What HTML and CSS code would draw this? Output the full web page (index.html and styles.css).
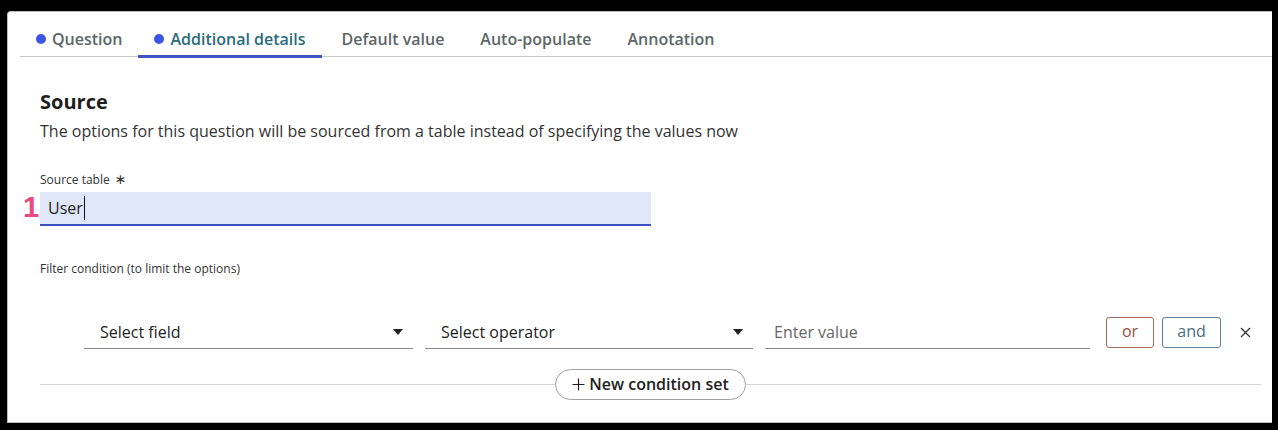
FILE: index.html
```html
<!DOCTYPE html>
<html lang="en">
<head>
<meta charset="utf-8">
<title>Source</title>
<link rel="stylesheet" href="styles.css">
</head>
<body>
<div class="frame">
  <nav class="tabs">
    <div class="tab tab-dot"><span class="dot"></span>Question</div>
    <div class="tab tab-dot active"><span class="dot"></span>Additional details</div>
    <div class="tab tab-plain">Default value</div>
    <div class="tab tab-plain">Auto-populate</div>
    <div class="tab tab-plain">Annotation</div>
  </nav>
  <main class="content">
    <h2 class="title">Source</h2>
    <p class="desc">The options for this question will be sourced from a table instead of specifying the values now</p>

    <div class="field">
      <label class="label">Source table <span class="req">∗</span></label>
      <div class="input-wrap">
        <span class="marker">1</span>
        <div class="input">User<span class="caret-cursor"></span></div>
      </div>
    </div>

    <div class="filter-label">Filter condition (to limit the options)</div>

    <div class="cond-row">
      <div class="select"><span>Select field</span><span class="tri"></span></div>
      <div class="select"><span>Select operator</span><span class="tri"></span></div>
      <div class="value">Enter value</div>
      <button class="btn btn-or">or</button>
      <button class="btn btn-and">and</button>
      <span class="close">
        <svg width="11" height="11" viewBox="0 0 11 11"><path d="M1 1L10 10M10 1L1 10" stroke="#333" stroke-width="1.3" fill="none"/></svg>
      </span>
    </div>

    <div class="divider">
      <span class="line"></span>
      <button class="pill">
        <svg width="13" height="13" viewBox="0 0 13 13"><path d="M6.5 0.5V12.5M0.5 6.5H12.5" stroke="#222" stroke-width="1.2" fill="none"/></svg>
        New condition set
      </button>
      <span class="line"></span>
    </div>
  </main>
</div>
</body>
</html>
```
FILE: styles.css
```css
* { box-sizing: border-box; }
html, body { margin: 0; padding: 0; }
body {
  background: #000;
  font-family: "Open Sans", "Liberation Sans", sans-serif;
  color: #222;
}
.frame {
  margin: 11px 6px 0 7px;
  height: 412px;
  background: #fff;
  border: 1px solid #bdbdbd;
  border-right: none;
  border-radius: 4px 0 0 0;
}
.tabs {
  display: flex;
  margin-left: 12px;
  height: 45px;
  border-bottom: 1px solid #c6c6c6;
}
.tab {
  position: relative;
  display: flex;
  align-items: center;
  padding: 9px 16px 0;
  font-size: 16px;
  font-weight: 600;
  color: #5e6668;
  white-space: nowrap;
}
.tab-plain { margin-left: 4px; }
.tab.active { color: #2a6b7c; }
.tab.active::after {
  content: "";
  position: absolute;
  left: 0; right: 0; bottom: -2px;
  height: 3px;
  background: #3f55c2;
}
.dot {
  width: 10px; height: 10px;
  border-radius: 50%;
  background: #3b55e4;
  margin-right: 6px;
}
.content {
  padding: 0 11px 0 32px;
}
.title {
  margin: 32px 0 0;
  font-size: 20px;
  line-height: 26px;
  font-weight: 700;
  color: #1e1e1e;
}
.desc {
  margin: 5px 0 0;
  font-size: 16px;
  line-height: 22px;
  color: #333;
}
.field { margin-top: 29px; }
.label {
  display: block;
  font-size: 12px;
  line-height: 16px;
  color: #333;
}
.req { font-family: "DejaVu Sans", sans-serif; font-size: 14px; margin-left: 2px; }
.input-wrap {
  position: relative;
  margin-top: 4px;
}
.marker {
  position: absolute;
  left: -17px;
  top: -2px;
  font-family: "Liberation Sans", sans-serif;
  font-weight: 700;
  font-size: 29px;
  line-height: 34px;
  color: #e94a7f;
}
.input {
  width: 611px;
  height: 34px;
  background: #dfe6f7;
  border-bottom: 2px solid #3b53c2;
  padding: 0 8px;
  font-size: 16px;
  line-height: 32px;
  color: #222;
  display: flex;
  align-items: center;
}
.caret-cursor {
  display: inline-block;
  width: 1px;
  height: 24px;
  background: #111;
  margin-left: 1px;
}
.filter-label {
  margin-top: 35px;
  font-size: 12px;
  line-height: 16px;
  color: #333;
}
.cond-row {
  display: flex;
  align-items: center;
  margin-top: 40px;
  margin-left: 44px;
  height: 32px;
}
.select {
  width: 329px;
  height: 32px;
  border-bottom: 1px solid #8a8a8a;
  display: flex;
  align-items: center;
  justify-content: space-between;
  padding: 0 10px 1px 16px;
  font-size: 16px;
  color: #222;
  margin-right: 12px;
}
.select + .select { width: 328px; }
.tri {
  width: 0; height: 0;
  border-left: 5.5px solid transparent;
  border-right: 5.5px solid transparent;
  border-top: 6px solid #222;
}
.value {
  width: 325px;
  height: 32px;
  border-bottom: 1px solid #8a8a8a;
  display: flex;
  align-items: center;
  padding: 0 0 1px 9px;
  font-size: 16px;
  color: #666;
  margin-right: 16px;
}
.btn {
  height: 31px;
  background: #fff;
  border-radius: 3px;
  font-family: "Open Sans", "Liberation Sans", sans-serif;
  font-size: 16px;
  padding: 0 0 2px;
  margin-top: -2px;
}
.btn-or {
  width: 48px;
  border: 1px solid #a36a5c;
  color: #9a4e3c;
  margin-right: 8px;
}
.btn-and {
  width: 59px;
  border: 1px solid #62819a;
  color: #4b6d84;
}
.close {
  display: flex;
  margin-left: 19px;
  margin-top: -2px;
}
.divider {
  display: flex;
  align-items: center;
  margin-top: 20px;
}
.line {
  flex: 1;
  height: 1px;
  background: #d3d3d3;
}
.pill {
  display: flex;
  align-items: center;
  gap: 4px;
  height: 31px;
  width: 191px;
  justify-content: center;
  background: #fff;
  border: 1px solid #a0a0a0;
  border-radius: 16px;
  font-family: "Open Sans", "Liberation Sans", sans-serif;
  font-size: 16px;
  font-weight: 600;
  color: #222;
  padding: 0 0 1px;
}
```
